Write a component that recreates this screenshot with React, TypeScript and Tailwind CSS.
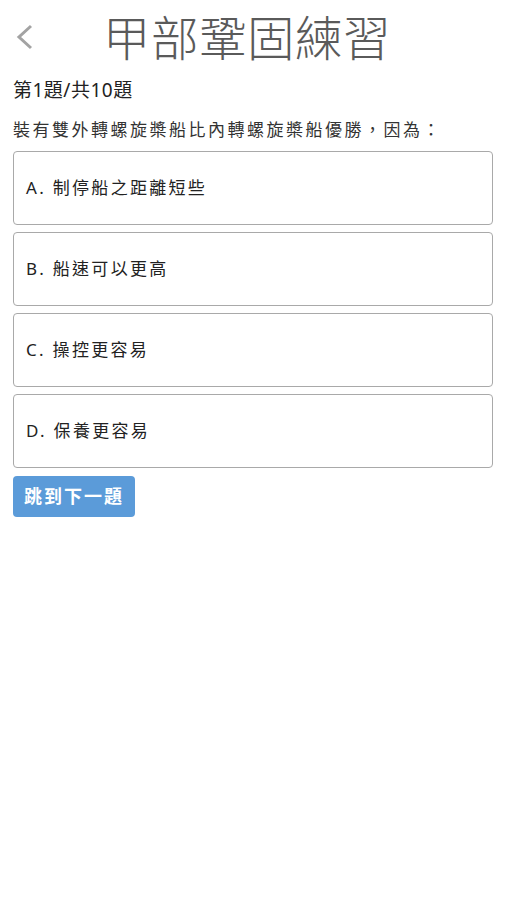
const OPTIONS = ["A. 制停船之距離短些", "B. 船速可以更高", "C. 操控更容易", "D. 保養更容易"];

export default function App() {
  return (
    <div
      className="min-h-[900px] w-full bg-white px-[13px]"
      style={{ fontFamily: '"Noto Sans", "Noto Sans CJK TC", sans-serif' }}
    >
      <div className="flex h-[76px] items-center">
        <svg width="20" height="28" viewBox="0 0 20 28" className="ml-[2px] mt-[-2px]">
          <polyline points="16,3 4,14 16,25" fill="none" stroke="#a3a3a3" strokeWidth="3" />
        </svg>
        <h1 className="ml-[68px] text-[47.5px] font-light leading-none tracking-[0.5px] text-[#5a5a5a]">
          甲部鞏固練習
        </h1>
      </div>
      <div className="text-[19px] leading-[28px] tracking-[0.5px] text-[#222]">第1題/共10題</div>
      <div className="mt-[14px] text-[17px] leading-[24px] tracking-[2.5px] text-[#333]">
        裝有雙外轉螺旋槳船比內轉螺旋槳船優勝，因為：
      </div>
      <div className="mt-[9px] flex flex-col gap-[7px]">
        {OPTIONS.map((o) => (
          <div
            key={o}
            className="flex h-[74px] items-center rounded-[4px] border border-[#a9a9a9] px-[12px] text-[17px] tracking-[2.3px] text-[#222]"
          >
            {o}
          </div>
        ))}
      </div>
      <button className="mt-[8px] h-[41px] rounded-[4px] bg-[#5b9bd9] px-[11px] text-[18px] font-bold tracking-[2px] text-white">
        跳到下一題
      </button>
    </div>
  );
}
